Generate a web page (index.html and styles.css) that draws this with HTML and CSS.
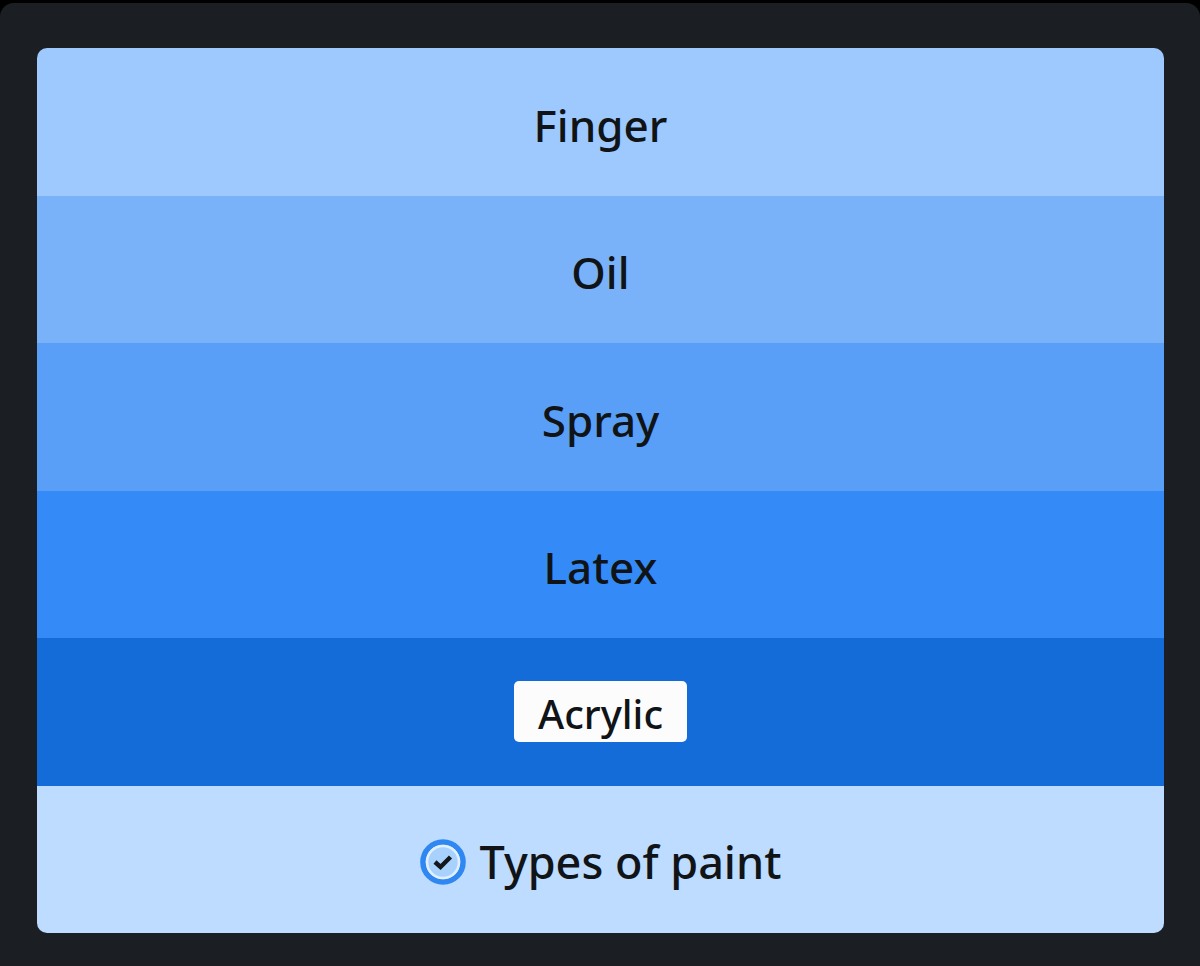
FILE: index.html
```
<!DOCTYPE html>
<html lang="en">
<head>
    <meta charset="UTF-8">
    <meta name="viewport" content="width=device-width, initial-scale=1.0">
    <title>Types of paint</title>
    <link rel="stylesheet" href="styles.css">
</head>
<body>
    <main class="panel">
        <div class="stack">
            <div class="row finger">Finger</div>
            <div class="row oil">Oil</div>
            <div class="row spray">Spray</div>
            <div class="row latex">Latex</div>
            <div class="row acrylic"><span class="tag">Acrylic</span></div>
            <h1 class="row category">
                <svg class="check" viewBox="0 0 46 46" aria-hidden="true">
                    <circle cx="23" cy="23" r="20" fill="none" stroke="#2f88f2" stroke-width="5.6"/>
                    <circle cx="23" cy="23" r="16" fill="#a9d1fd" stroke="#e1f0ff" stroke-width="2.6"/>
                    <path d="M15 23l5.500 5L30.500 18" fill="none" stroke="#14171c" stroke-width="4.4"/>
                </svg>
                Types of paint
            </h1>
        </div>
    </main>
</body>
</html>
```

FILE: styles.css
```
* {
    box-sizing: border-box;
}

body {
    margin: 0;
    padding-top: 3px;
    background-color: #000;
    color: #111417;
    font-family: "Noto Sans", "Open Sans", sans-serif;
}

.panel {
    display: flex;
    min-height: calc(100vh - 3px);
    padding: 45px 36px 33px 37px;
    background-color: #1b1f24;
    border-radius: 14px 14px 0 0;
}

.stack {
    flex: 1;
    display: flex;
    flex-direction: column;
    border-radius: 10px;
    overflow: hidden;
}

.row {
    flex: 1 0 auto;
    display: flex;
    align-items: center;
    justify-content: center;
    gap: 14px;
    margin: 0;
    padding: 18px 12px 12px;
    font-size: 44px;
    line-height: 60px;
    font-weight: 500;
}

.finger {
    background-color: #9ec9ff;
}

.oil {
    background-color: #79b2f9;
}

.spray {
    background-color: #599ff8;
}

.latex {
    background-color: #348bf7;
}

.acrylic {
    padding: 14px 12px 15px;
    background-color: #146cd9;
}

.category {
    background-color: #bddcff;
    font-size: 45px;
}

.tag {
    padding: 4px 24px 0;
    background-color: #fcfcfc;
    border-radius: 5px;
    font-size: 40px;
    line-height: 57px;
}

.check {
    width: 46px;
    height: 46px;
}
```
